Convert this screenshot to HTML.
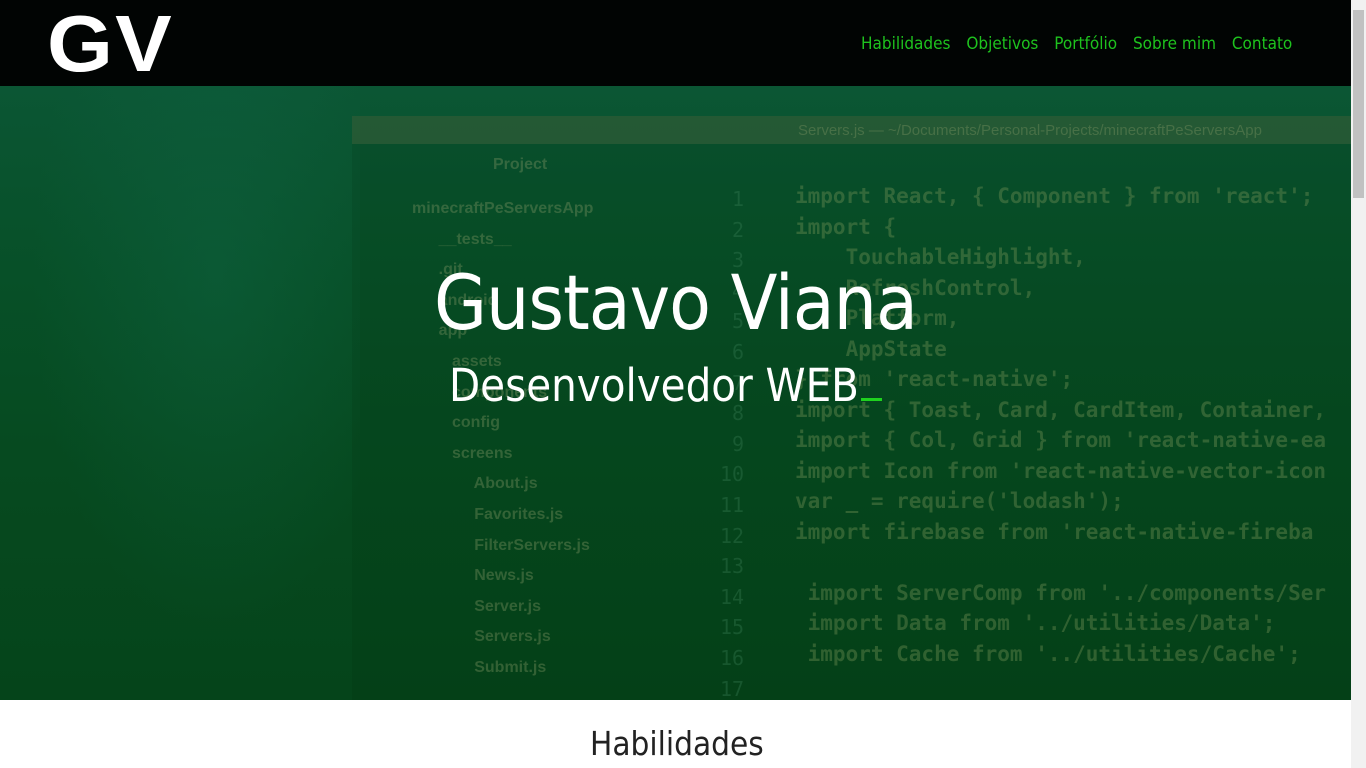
<!DOCTYPE html>
<html><head><meta charset="utf-8"><style>
*{margin:0;padding:0;box-sizing:border-box}
body{width:1366px;height:768px;overflow:hidden;background:#fff;font-family:"Liberation Sans",sans-serif;position:relative}
.nav{position:absolute;left:0;top:0;width:1351px;height:86px;background:#010403}
.logo{position:absolute;left:47px;top:4px;font:bold 80px/80px "Liberation Sans",sans-serif;color:#fff;letter-spacing:2px;transform:scaleX(1.06);transform-origin:left}
.links{position:absolute;top:34px;left:861px;font-size:17px;color:#1ec21e;font-family:"DejaVu Sans Condensed","Liberation Sans",sans-serif;white-space:nowrap}
.links span{margin-right:11px}
.hero{position:absolute;left:0;top:86px;width:1351px;height:614px;background:linear-gradient(180deg,#0b5634 0%,#075028 30%,#064a20 60%,#05441a 100%);overflow:hidden}
.mtn{position:absolute;left:0;top:0;width:360px;height:614px;background:radial-gradient(ellipse at 60% 30%,rgba(20,110,80,.3),transparent 60%)}
.win{position:absolute;left:352px;top:30px;width:1000px;height:600px;background:rgba(0,40,10,.12)}
.bar{position:absolute;left:352px;top:30px;width:1000px;height:28px;background:rgba(90,110,70,.35)}
.code{position:absolute;font-family:"DejaVu Sans Mono",monospace;color:rgba(120,150,90,.38);font-size:21px;line-height:30.5px;white-space:pre;font-weight:bold}
.tree{position:absolute;font-family:"Liberation Sans",sans-serif;color:rgba(130,150,100,.38);font-size:16px;line-height:30.6px;white-space:pre;font-weight:bold}
.nums{position:absolute;font-family:"DejaVu Sans Mono",monospace;color:rgba(60,130,90,.35);font-size:20px;line-height:30.6px;white-space:pre;text-align:right}
h1{position:absolute;left:434px;top:258px;font:normal 76px/90px "DejaVu Sans Condensed","Liberation Sans",sans-serif;color:#fff;letter-spacing:-1px;white-space:nowrap}
h2{position:absolute;left:449px;top:358px;font:normal 45px/56px "DejaVu Sans Condensed","Liberation Sans",sans-serif;color:#fff;white-space:nowrap}
.cur{display:inline-block;width:21px;height:3px;background:#1fd21f;vertical-align:baseline;margin-left:2px}
.sec{position:absolute;left:590px;top:722px;font:normal 33px/44px "DejaVu Sans Condensed","Liberation Sans",sans-serif;color:#222}
.sb{position:absolute;left:1351px;top:0;width:15px;height:768px;background:#f1f1f1}
.th{position:absolute;left:1353px;top:10px;width:11px;height:188px;background:#c1c1c1}
</style></head><body>
<div class="nav"><div class="logo">GV</div>
<div class="links"><span>Habilidades</span> <span>Objetivos</span> <span>Portfólio</span> <span>Sobre mim</span> <span>Contato</span></div></div>
<div class="hero">
<div class="mtn"></div><div class="win"></div><div class="bar"></div>
<div class="tree" style="left:798px;top:30px;font-size:15px;font-weight:normal">Servers.js — ~/Documents/Personal-Projects/minecraftPeServersApp</div>
<div class="tree" style="left:493px;top:64px;font-size:16px">Project</div>
<div class="tree" style="left:412px;top:108px">minecraftPeServersApp
      __tests__
      .git
      android
      app
         assets
         components
         config
         screens
              About.js
              Favorites.js
              FilterServers.js
              News.js
              Server.js
              Servers.js
              Submit.js</div>
<div class="nums" style="left:720px;top:98px">1
2
3
4
5
6
7
8
9
10
11
12
13
14
15
16
17</div>
<div class="code" style="left:795px;top:95px">import React, { Component } from 'react';
import {
    TouchableHighlight,
    RefreshControl,
    Platform,
    AppState
} from 'react-native';
import { Toast, Card, CardItem, Container,
import { Col, Grid } from 'react-native-ea
import Icon from 'react-native-vector-icon
var _ = require('lodash');
import firebase from 'react-native-fireba

 import ServerComp from '../components/Ser
 import Data from '../utilities/Data';
 import Cache from '../utilities/Cache';</div>
</div>
<h1>Gustavo Viana</h1>
<h2>Desenvolvedor WEB<span class="cur"></span></h2>
<div class="sec">Habilidades</div>
<div class="sb"></div><div class="th"></div>
</body></html>
